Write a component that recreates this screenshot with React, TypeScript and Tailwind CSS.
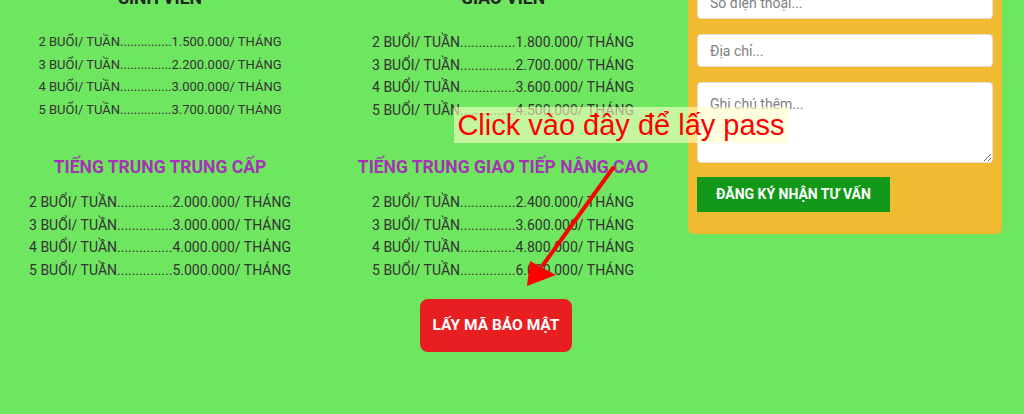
import React from 'react';

type Price = { sessions: number; price: string };

const DOTS = '...............';

const PriceList: React.FC<{ title: string; purple?: boolean; small?: boolean; items: Price[] }> = ({ title, purple, small, items }) => (
  <div className="flex flex-col items-center">
    <h3 className={`text-[17.5px] font-bold leading-6 uppercase ${purple ? 'text-[#a334b3]' : 'text-[#222]'}`}>{title}</h3>
    <ul className={`${purple ? 'mt-[12px]' : 'mt-[21px]'} ${small ? 'text-[13px]' : 'text-[14px]'} leading-[22.5px] text-[#333]`}>
      {items.map(i => (
        <li key={i.sessions}>{i.sessions} BUỔI/ TUẦN{DOTS}{i.price}/ THÁNG</li>
      ))}
    </ul>
  </div>
);

export default function App() {
  return (
    <div className="relative h-[414px] w-[1024px] overflow-hidden bg-[#6fe65f] font-['Roboto','Noto_Sans',sans-serif]">
      <div className="flex items-start">
        <main className="-mt-[14px] grid w-[676px] grid-cols-[320px_346px] gap-x-[10px] gap-y-[34px]">
          <PriceList title="Sinh viên" small items={[
            { sessions: 2, price: '1.500.000' },
            { sessions: 3, price: '2.200.000' },
            { sessions: 4, price: '3.000.000' },
            { sessions: 5, price: '3.700.000' },
          ]} />
          <PriceList title="Giáo viên" items={[
            { sessions: 2, price: '1.800.000' },
            { sessions: 3, price: '2.700.000' },
            { sessions: 4, price: '3.600.000' },
            { sessions: 5, price: '4.500.000' },
          ]} />
          <PriceList title="Tiếng Trung trung cấp" purple items={[
            { sessions: 2, price: '2.000.000' },
            { sessions: 3, price: '3.000.000' },
            { sessions: 4, price: '4.000.000' },
            { sessions: 5, price: '5.000.000' },
          ]} />
          <div>
            <PriceList title="Tiếng Trung giao tiếp nâng cao" purple items={[
              { sessions: 2, price: '2.400.000' },
              { sessions: 3, price: '3.600.000' },
              { sessions: 4, price: '4.800.000' },
              { sessions: 5, price: '6.000.000' },
            ]} />
            <button className="ml-[90px] mt-[18px] h-[53px] w-[152px] rounded-lg bg-[#e91e21] text-[15.5px] font-bold text-white">LẤY MÃ BẢO MẬT</button>
          </div>
        </main>

        <aside className="-mt-[24px] ml-[12px] w-[314px] rounded-b-md bg-[#f0bb30] px-[9px] pb-[22px] pt-[10px]">
          <div className="flex flex-col gap-[15px]">
            <input placeholder="Số điện thoại..." className="h-[33px] rounded border border-[#ddd] bg-white px-3 text-[14px] text-[#555] placeholder:text-[#808080] outline-none" />
            <input placeholder="Địa chỉ..." className="h-[33px] rounded border border-[#ddd] bg-white px-3 text-[14px] text-[#555] placeholder:text-[#808080] outline-none" />
            <textarea placeholder="Ghi chú thêm..." className="h-[81px] rounded border border-[#ddd] bg-white px-3 pt-[11px] text-[14px] text-[#555] placeholder:text-[#808080] outline-none" />
          </div>
          <button className="mt-[14px] h-[35px] w-[193px] bg-[#12991a] text-[14px] font-bold text-white">ĐĂNG KÝ NHẬN TƯ VẤN</button>
        </aside>
      </div>

      <div className="absolute left-[454px] top-[107px] flex h-[36px] w-[334px] items-center justify-center bg-[#ffffc8]/60 font-['Liberation_Sans',Arial,sans-serif] text-[29px] leading-none text-[#ff0000]">
        Click vào đây để lấy pass
      </div>

      <svg className="pointer-events-none absolute inset-0" width="1024" height="414" viewBox="0 0 1024 414">
        <line x1="613" y1="168" x2="543" y2="265" stroke="#ff0000" strokeWidth="4" strokeLinecap="round" />
        <polygon points="527,286 530,261 556,275" fill="#ff0000" />
      </svg>
    </div>
  );
}
